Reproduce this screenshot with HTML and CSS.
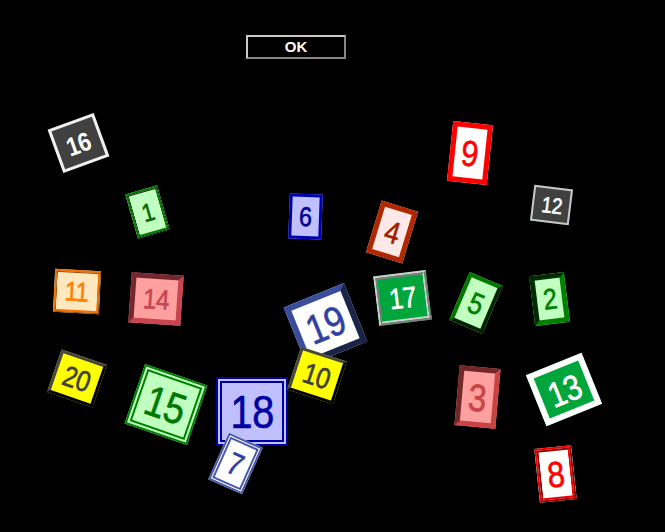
FILE: index.html
```html
<!DOCTYPE html>
<html lang="ja">
<head>
<meta charset="utf-8">
<title>Tiles</title>
<link rel="stylesheet" href="styles.css">
</head>
<body>
<div class="stage">
  <div class="toolbar"><button class="ok-btn" type="button">OK</button></div>
  <div class="board">
    <div class="tile t16"><span class="num">16</span></div>
    <div class="tile t1"><span class="num">1</span></div>
    <div class="tile t6"><span class="num">6</span></div>
    <div class="tile t9"><span class="num">9</span></div>
    <div class="tile t12"><span class="num">12</span></div>
    <div class="tile t4"><span class="num">4</span></div>
    <div class="tile t17"><span class="num">17</span></div>
    <div class="tile t5"><span class="num">5</span></div>
    <div class="tile t2"><span class="num">2</span></div>
    <div class="tile t11"><span class="num">11</span></div>
    <div class="tile t14"><span class="num">14</span></div>
    <div class="tile t20"><span class="num">20</span></div>
    <div class="tile t15"><span class="num">15</span></div>
    <div class="tile t18"><span class="num">18</span></div>
    <div class="tile t7"><span class="num">7</span></div>
    <div class="tile t19"><span class="num">19</span></div>
    <div class="tile t10"><span class="num">10</span></div>
    <div class="tile t3"><span class="num">3</span></div>
    <div class="tile t13"><span class="num">13</span></div>
    <div class="tile t8"><span class="num">8</span></div>
  </div>
</div>
</body>
</html>
```

FILE: styles.css
```css
html, body {
  margin: 0;
  padding: 0;
  background: #000;
}
.stage {
  position: relative;
  width: 665px;
  height: 532px;
  background: #000;
  overflow: hidden;
}
.toolbar {
  display: flex;
  padding: 35px 0 0 246px;
}
.ok-btn {
  box-sizing: border-box;
  width: 100px;
  height: 24px;
  margin: 0;
  padding: 0;
  background: #000;
  color: #fff;
  border: 2px solid;
  border-color: #cdc8c2 #8a8580 #8a8580 #cdc8c2;
  font-family: "Liberation Sans", Arial, sans-serif;
  font-weight: bold;
  font-size: 15px;
  line-height: 20px;
}
.board {
  position: absolute;
  inset: 0;
  pointer-events: none;
}
.tile {
  position: absolute;
  box-sizing: border-box;
  display: flex;
  align-items: center;
  justify-content: center;
  font-family: "Liberation Sans", Arial, sans-serif;
  line-height: 1;
  padding-top: 1px;
}
.num {
  display: block;
  transform: scaleX(0.86);
  letter-spacing: -0.3px;
  -webkit-text-stroke: 0.6px currentColor;
}

/* center-based placement: left = cx - w/2, top = cy - h/2 */
.t1  { left: 131px; top: 189px; width: 33px; height: 46px; transform: rotate(-16deg);
       background: #c0ffc0; border: 3px ridge #007a00; color: #006400; font-size: 25px; }
.t2  { left: 532px; top: 274px; width: 35px; height: 50px; transform: rotate(-7deg);
       background: #c0ffc0; border: 5px inset #008000; color: #008000; font-size: 29px; }
.t3  { left: 457px; top: 367px; width: 41px; height: 60px; transform: rotate(5deg);
       background: #ffa0a0; border: 5px inset #c84444; color: #c84444; font-size: 38px; }
.t4  { left: 373px; top: 205px; width: 38px; height: 54px; transform: rotate(17deg);
       background: #ffe8e8; border: 5px solid #b02800; color: #a02000; font-size: 31px; }
.t5  { left: 458px; top: 277px; width: 36px; height: 52px; transform: rotate(23deg);
       background: #c0ffc0; border: 4px outset #007800; color: #008000; font-size: 30px; }
.t6  { left: 289px; top: 194px; width: 33px; height: 45px; transform: rotate(2deg);
       background: #c0c0ff; border: 3px solid #0000b0; color: #000090; font-size: 27px; }
.t7  { left: 217px; top: 438px; width: 37px; height: 51px; transform: rotate(24deg);
       background: #fff; border: 5px double #4858a8; color: #3040a0; font-size: 31px; }
.t8  { left: 537px; top: 447px; width: 37px; height: 54px; transform: rotate(-6deg);
       background: #fff; border: 4px ridge #ee0000; color: #ff0000; font-size: 36px; }
.t9  { left: 450px; top: 123px; width: 40px; height: 60px; transform: rotate(6deg);
       background: #fff; border: 5px solid #ff0000; color: #ff0000; font-size: 36px; }
.t10 { left: 293px; top: 353px; width: 48px; height: 45px; transform: rotate(18deg);
       background: #ffff00; border: 3px outset #464646; color: #404040; font-size: 29px; }
.t11 { left: 54px; top: 270px; width: 46px; height: 43px; transform: rotate(3deg);
       background: #ffe8c0; border: 3px ridge #f07000; color: #ff8000; font-size: 27px; }
.t12 { left: 532px; top: 187px; width: 39px; height: 36px; transform: rotate(7deg);
       background: #404040; border: 2px solid #c8c8c8; color: #fff; font-size: 22px; }
.t13 { left: 534px; top: 362px; width: 60px; height: 55px; transform: rotate(-22deg);
       background: #00a63c; border: 6px solid #fff; color: #fff; font-size: 35px; }
.t14 { left: 130px; top: 274px; width: 52px; height: 50px; transform: rotate(4deg);
       background: #ffa0a0; border: 5px inset #c84450; color: #c84450; font-size: 28px; }
.t15 { left: 133px; top: 373px; width: 66px; height: 63px; transform: rotate(19deg);
       background: #c0ffc0; border: 6px double #008000; color: #007800; font-size: 43px; }
.t16 { left: 54px; top: 120px; width: 49px; height: 46px; transform: rotate(-20deg);
       background: #404040; border: 3px solid #f0f0f0; color: #fff; font-size: 26px; font-weight: bold; }
.t16 .num { -webkit-text-stroke: 0; }
.t17 { left: 376px; top: 273px; width: 53px; height: 50px; transform: rotate(-7deg);
       background: #00a63c; border: 4px ridge #d0d0d0; color: #fff; font-size: 29px; }
.t18 { left: 216px; top: 377px; width: 72px; height: 69px; transform: rotate(0deg);
       background: #c0c0ff; border: 6px double #0000a0; color: #0000a0; font-size: 46px; }
.t19 { left: 293px; top: 293px; width: 65px; height: 63px; transform: rotate(-22deg);
       background: #fff; border: 6px outset #3a4c9c; color: #3040a0; font-size: 41px; }
.t20 { left: 53px; top: 356px; width: 48px; height: 45px; transform: rotate(19deg);
       background: #ffff00; border: 3px outset #464646; color: #404040; font-size: 29px; }
```
